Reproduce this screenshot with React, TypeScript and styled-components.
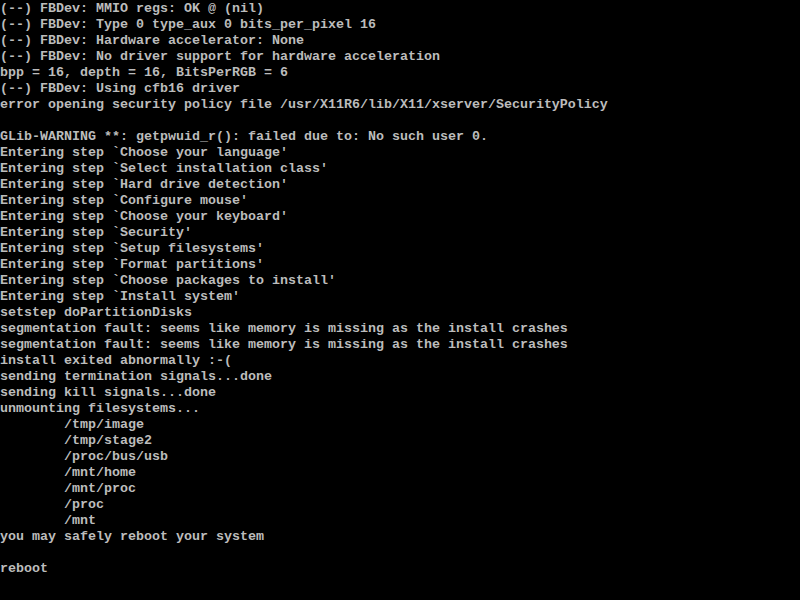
import React from "react";
import styled, { createGlobalStyle } from "styled-components";

const Global = createGlobalStyle`
  html, body { margin: 0; padding: 0; background: #000; }
  body { width: 800px; height: 600px; overflow: hidden; }
`;

const Screen = styled.div`
  width: 800px;
  height: 600px;
  background: #000;
  display: flex;
  flex-direction: column;
  padding: 1px 0 0 0;
  box-sizing: border-box;
`;

const Line = styled.div<{ $indent?: number }>`
  height: 16px;
  line-height: 16px;
  padding-left: ${(p) => (p.$indent ?? 0) * 8}px;
  font-family: "Liberation Mono", "DejaVu Sans Mono", monospace;
  font-size: 13.33px;
  letter-spacing: 0px;
  font-weight: bold;
  color: #bcbcbc;
  white-space: pre;
`;

const lines: [string, number?][] = [
  ["(--) FBDev: MMIO regs: OK @ (nil)"],
  ["(--) FBDev: Type 0 type_aux 0 bits_per_pixel 16"],
  ["(--) FBDev: Hardware accelerator: None"],
  ["(--) FBDev: No driver support for hardware acceleration"],
  ["bpp = 16, depth = 16, BitsPerRGB = 6"],
  ["(--) FBDev: Using cfb16 driver"],
  ["error opening security policy file /usr/X11R6/lib/X11/xserver/SecurityPolicy"],
  [""],
  ["GLib-WARNING **: getpwuid_r(): failed due to: No such user 0."],
  ["Entering step `Choose your language'"],
  ["Entering step `Select installation class'"],
  ["Entering step `Hard drive detection'"],
  ["Entering step `Configure mouse'"],
  ["Entering step `Choose your keyboard'"],
  ["Entering step `Security'"],
  ["Entering step `Setup filesystems'"],
  ["Entering step `Format partitions'"],
  ["Entering step `Choose packages to install'"],
  ["Entering step `Install system'"],
  ["setstep doPartitionDisks"],
  ["segmentation fault: seems like memory is missing as the install crashes"],
  ["segmentation fault: seems like memory is missing as the install crashes"],
  ["install exited abnormally :-("],
  ["sending termination signals...done"],
  ["sending kill signals...done"],
  ["unmounting filesystems..."],
  ["/tmp/image", 8],
  ["/tmp/stage2", 8],
  ["/proc/bus/usb", 8],
  ["/mnt/home", 8],
  ["/mnt/proc", 8],
  ["/proc", 8],
  ["/mnt", 8],
  ["you may safely reboot your system"],
  [""],
  ["reboot"],
];

export default function App() {
  return (
    <>
      <Global />
      <Screen>
        {lines.map(([text, indent], i) => (
          <Line key={i} $indent={indent}>
            {text}
          </Line>
        ))}
      </Screen>
    </>
  );
}
